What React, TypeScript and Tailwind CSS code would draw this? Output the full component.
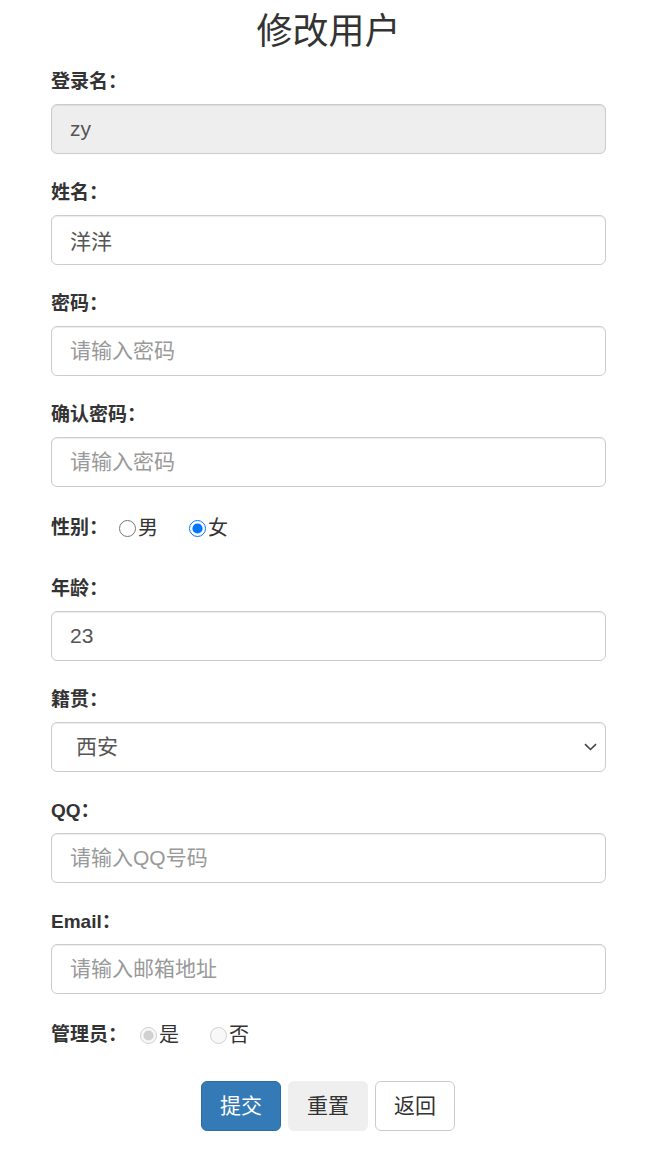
import { useState } from "react";

const font = { fontFamily: '"Liberation Sans", "Noto Sans CJK SC", sans-serif' };

function Field({
  label,
  children,
}: {
  label: string;
  children: React.ReactNode;
}) {
  return (
    <div className="mb-[26px]">
      <label className="block h-[26px] leading-[26px] mb-[9px] text-[19px] font-bold text-[#333]">
        {label}
      </label>
      {children}
    </div>
  );
}

const inputCls =
  "block w-full h-[50px] px-[18px] text-[21px] text-[#555] border border-[#ccc] rounded-[6px] outline-none placeholder:text-[#999] shadow-[inset_0_1px_1px_rgba(0,0,0,0.075)]";

const radioCls = "w-[17px] h-[17px] m-0 mr-[2px]";

export default function App() {
  const [sex, setSex] = useState("female");
  const [name, setName] = useState("洋洋");
  const [age, setAge] = useState("23");
  const [city, setCity] = useState("西安");

  return (
    <div className="min-h-[1161px] bg-white text-[#333]" style={font}>
      <div className="pl-[51px] pr-[54px]">
        <h3 className="h-[64px] leading-[64px] mb-[5px] text-center text-[36px] font-normal text-[#333]">
          修改用户
        </h3>

        <Field label="登录名：">
          <input className={`${inputCls} bg-[#eee]`} value="zy" disabled readOnly />
        </Field>

        <Field label="姓名：">
          <input className={inputCls} value={name} onChange={(e) => setName(e.target.value)} />
        </Field>

        <Field label="密码：">
          <input className={inputCls} type="password" placeholder="请输入密码" />
        </Field>

        <Field label="确认密码：">
          <input className={inputCls} type="password" placeholder="请输入密码" />
        </Field>

        <div className="flex items-center h-[30px] mb-[33px]">
          <span className="text-[19px] font-bold w-[68px]">性别：</span>
          <label className="flex items-center text-[20px] text-[#333]">
            <input
              type="radio"
              name="sex"
              className={radioCls}
              checked={sex === "male"}
              onChange={() => setSex("male")}
            />
            男
          </label>
          <label className="flex items-center text-[20px] text-[#333] ml-[31px]">
            <input
              type="radio"
              name="sex"
              className={radioCls}
              checked={sex === "female"}
              onChange={() => setSex("female")}
            />
            女
          </label>
        </div>

        <Field label="年龄：">
          <input className={inputCls} value={age} onChange={(e) => setAge(e.target.value)} />
        </Field>

        <Field label="籍贯：">
          <div className="relative">
            <select
              className={`${inputCls} appearance-none bg-white pl-[24px]`}
              value={city}
              onChange={(e) => setCity(e.target.value)}
            >
              <option>西安</option>
              <option>北京</option>
              <option>上海</option>
            </select>
            <svg
              className="absolute right-[9px] top-[21px] pointer-events-none"
              width="13"
              height="8"
              viewBox="0 0 13 8"
              fill="none"
              stroke="#444"
              strokeWidth="1.6"
            >
              <path d="M1 1.2l5.5 5.3L12 1.2" />
            </svg>
          </div>
        </Field>

        <Field label="QQ：">
          <input className={inputCls} placeholder="请输入QQ号码" />
        </Field>

        <Field label="Email：">
          <input className={inputCls} placeholder="请输入邮箱地址" />
        </Field>

        <div className="flex items-center h-[30px] mb-[31px]">
          <span className="text-[19px] font-bold w-[89px]">管理员：</span>
          <label className="flex items-center text-[20px] text-[#333]">
            <input type="radio" name="admin" className={radioCls} defaultChecked disabled />
            是
          </label>
          <label className="flex items-center text-[20px] text-[#333] ml-[31px]">
            <input type="radio" name="admin" className={radioCls} disabled />
            否
          </label>
        </div>

        <div className="flex justify-center gap-[7px] pr-[1px]">
          <button className="w-[80px] h-[50px] text-[21px] text-white bg-[#337ab7] border border-[#2e6da4] rounded-[6px]">
            提交
          </button>
          <button className="w-[80px] h-[50px] text-[21px] text-[#333] bg-[#efefef] rounded-[6px]">
            重置
          </button>
          <button className="w-[80px] h-[50px] text-[21px] text-[#333] bg-white border border-[#ccc] rounded-[6px]">
            返回
          </button>
        </div>
      </div>
    </div>
  );
}
